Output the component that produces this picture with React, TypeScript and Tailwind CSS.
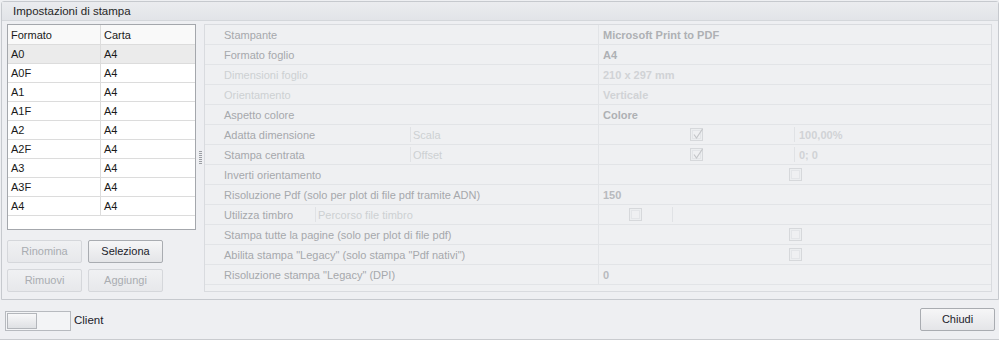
import React from "react";

const FONT = { fontFamily: '"Liberation Sans", Arial, sans-serif' };

function CheckBox({ checked }: { checked?: boolean }) {
  return (
    <div className="relative w-[13px] h-[13px] border border-[#d6d8db] bg-[#eceef0] flex items-center justify-center">
      <div className="w-[9px] h-[9px] border border-[#e3e5e8] bg-[#eff0f2]" />
      {checked && (
        <svg className="absolute left-[1px] top-[-1px]" width="12" height="12" viewBox="0 0 12 12">
          <path d="M2 6.5 L4.5 10 L10.5 1" fill="none" stroke="#c4c6c9" strokeWidth="1.2" />
        </svg>
      )}
    </div>
  );
}

function PRow({ children }: { children: React.ReactNode }) {
  return <div className="flex h-[20px] border-b border-[#e2e4e7] shrink-0 pt-[2px]">{children}</div>;
}

function Label({ text, dim }: { text: string; dim?: boolean }) {
  return (
    <div className={dim ? "w-[393px] flex items-center pl-[19px] text-[#cdd0d3]" : "w-[393px] flex items-center pl-[19px] text-[#a6a8ac]"}>
      {text}
    </div>
  );
}

function Value({ children }: { children?: React.ReactNode }) {
  return <div className="flex-1 flex items-center border-l border-[#e2e4e7] pl-[4px] mt-[-2px] pt-[2px]">{children}</div>;
}

function Btn({ text, enabled }: { text: string; enabled?: boolean }) {
  return (
    <div
      className={
        enabled
          ? "w-[75px] h-[23px] flex items-center justify-center rounded-[2px] border border-[#a9acb1] bg-gradient-to-b from-[#f6f6f7] to-[#e4e5e8] text-[#1b1b2a]"
          : "w-[75px] h-[23px] flex items-center justify-center rounded-[2px] border border-[#d5d7db] bg-gradient-to-b from-[#f0f1f3] to-[#e7e8eb] text-[#a9acb1]"
      }
    >
      {text}
    </div>
  );
}

const rows = ["A0", "A0F", "A1", "A1F", "A2", "A2F", "A3", "A3F", "A4"];

const SplitVal = "flex-1 flex items-center border-l border-[#e2e4e7] mt-[-2px] pt-[2px]";
const CenterVal = "flex-1 flex items-center justify-center border-l border-[#e2e4e7] mt-[-2px]";

export default function App() {
  return (
    <div className="w-[999px] h-[340px] bg-[#eeeff2] text-[11px] leading-none flex flex-col border-b border-[#c9cbcf]" style={FONT}>
      {/* group box */}
      <div className="ml-[1px] mt-[1px] w-[998px] h-[299px] border border-[#c6c9ce] rounded-t-[3px] flex flex-col shrink-0">
        <div className="h-[19px] border-b border-[#d4d7db] bg-gradient-to-b from-[#ebecef] to-[#e2e4e8] flex items-center pl-[11px] pt-[1px] text-[#262626] text-[11.5px] shrink-0">
          Impostazioni di stampa
        </div>
        <div className="flex pt-[3px] pl-[5px]">
          {/* left column */}
          <div className="w-[189px] flex flex-col">
            <div className="h-[206px] border border-[#a4a7ac] bg-white flex flex-col text-[#1a1a1a]">
              <div className="flex h-[20px] border-b border-[#dcdcdc] bg-[#f9f9f9] shrink-0">
                <div className="w-[93px] border-r border-[#dcdcdc] flex items-center pl-[3px] pt-[1px]">Formato</div>
                <div className="flex-1 flex items-center pl-[3px] pt-[1px]">Carta</div>
              </div>
              {rows.map((r, i) => (
                <div
                  key={r}
                  className={
                    i === 0
                      ? "flex h-[19px] border-b border-[#dcdcdc] bg-[#ebebeb] shrink-0"
                      : "flex h-[19px] border-b border-[#dcdcdc] shrink-0"
                  }
                >
                  <div className="w-[93px] border-r border-[#dcdcdc] flex items-center pl-[3px] pt-[1px]">{r}</div>
                  <div className="flex-1 flex items-center pl-[3px] pt-[1px]">A4</div>
                </div>
              ))}
            </div>
            <div className="mt-[10px] flex gap-[6px]">
              <Btn text="Rinomina" />
              <Btn text="Seleziona" enabled />
            </div>
            <div className="mt-[6px] flex gap-[6px]">
              <Btn text="Rimuovi" />
              <Btn text="Aggiungi" />
            </div>
          </div>
          {/* splitter */}
          <div className="w-[8px] flex items-center justify-center">
            <svg width="3" height="14" viewBox="0 0 3 14">
              {[0, 2, 4, 6, 8, 10, 12].map((y) => (
                <rect key={y} x="0" y={y} width="3" height="1" fill="#9a9da2" />
              ))}
            </svg>
          </div>
          {/* property grid */}
          <div className="w-[788px] h-[268px] border border-[#d9dbdf] bg-[#eff0f2] flex flex-col">
            <PRow>
              <Label text="Stampante" />
              <Value><span className="font-bold text-[#aeb0b4]">Microsoft Print to PDF</span></Value>
            </PRow>
            <PRow>
              <Label text="Formato foglio" />
              <Value><span className="font-bold text-[#aeb0b4]">A4</span></Value>
            </PRow>
            <PRow>
              <Label text="Dimensioni foglio" dim />
              <Value><span className="font-bold text-[#d1d3d6]">210 x 297 mm</span></Value>
            </PRow>
            <PRow>
              <Label text="Orientamento" dim />
              <Value><span className="font-bold text-[#d1d3d6]">Verticale</span></Value>
            </PRow>
            <PRow>
              <Label text="Aspetto colore" />
              <Value><span className="font-bold text-[#aeb0b4]">Colore</span></Value>
            </PRow>
            <PRow>
              <div className="w-[393px] flex items-center">
                <div className="w-[205px] pl-[19px] text-[#a6a8ac]">Adatta dimensione</div>
                <div className="w-px h-[15px] bg-[#e0e2e5] mt-[-2px]" />
                <div className="pl-[2px] text-[#cdd0d3]">Scala</div>
              </div>
              <div className={SplitVal}>
                <div className="w-[195px] flex justify-center mt-[-2px]"><CheckBox checked /></div>
                <div className="w-px h-[15px] bg-[#e0e2e5] mt-[-2px]" />
                <div className="pl-[4px] font-bold text-[#d1d3d6]">100,00%</div>
              </div>
            </PRow>
            <PRow>
              <div className="w-[393px] flex items-center">
                <div className="w-[205px] pl-[19px] text-[#a6a8ac]">Stampa centrata</div>
                <div className="w-px h-[15px] bg-[#e0e2e5] mt-[-2px]" />
                <div className="pl-[2px] text-[#cdd0d3]">Offset</div>
              </div>
              <div className={SplitVal}>
                <div className="w-[195px] flex justify-center mt-[-2px]"><CheckBox checked /></div>
                <div className="w-px h-[15px] bg-[#e0e2e5] mt-[-2px]" />
                <div className="pl-[4px] font-bold text-[#d1d3d6]">0; 0</div>
              </div>
            </PRow>
            <PRow>
              <Label text="Inverti orientamento" />
              <div className={CenterVal}><CheckBox /></div>
            </PRow>
            <PRow>
              <Label text="Risoluzione Pdf (solo per plot di file pdf tramite ADN)" />
              <Value><span className="font-bold text-[#b8babe]">150</span></Value>
            </PRow>
            <PRow>
              <div className="w-[393px] flex items-center">
                <div className="w-[110px] pl-[19px] text-[#a6a8ac]">Utilizza timbro</div>
                <div className="w-px h-[15px] bg-[#e0e2e5] mt-[-2px]" />
                <div className="pl-[2px] text-[#cdd0d3]">Percorso file timbro</div>
              </div>
              <div className={SplitVal}>
                <div className="w-[73px] flex justify-center mt-[-2px]"><CheckBox /></div>
                <div className="w-px h-[15px] bg-[#e0e2e5] mt-[-2px]" />
              </div>
            </PRow>
            <PRow>
              <Label text="Stampa tutte la pagine (solo per plot di file pdf)" />
              <div className={CenterVal}><CheckBox /></div>
            </PRow>
            <PRow>
              <Label text={'Abilita stampa "Legacy" (solo stampa "Pdf nativi")'} />
              <div className={CenterVal}><CheckBox /></div>
            </PRow>
            <PRow>
              <Label text={'Risoluzione stampa "Legacy" (DPI)'} />
              <Value><span className="font-bold text-[#b8babe]">0</span></Value>
            </PRow>
          </div>
        </div>
      </div>
      {/* bottom bar */}
      <div className="flex-1 flex items-center justify-between pl-[5px] pr-[4px]">
        <div className="flex items-center mt-[2px]">
          <div className="w-[66px] h-[20px] border border-[#b7babf] bg-[#f3f4f6] flex items-center p-[1px]">
            <div className="w-[30px] h-full border border-[#b3b6bb] bg-gradient-to-b from-[#f8f8f9] to-[#dfe1e4]" />
          </div>
          <span className="ml-[3px] text-[#1b1b2a] text-[11.5px]">Client</span>
        </div>
        <Btn text="Chiudi" enabled />
      </div>
    </div>
  );
}
